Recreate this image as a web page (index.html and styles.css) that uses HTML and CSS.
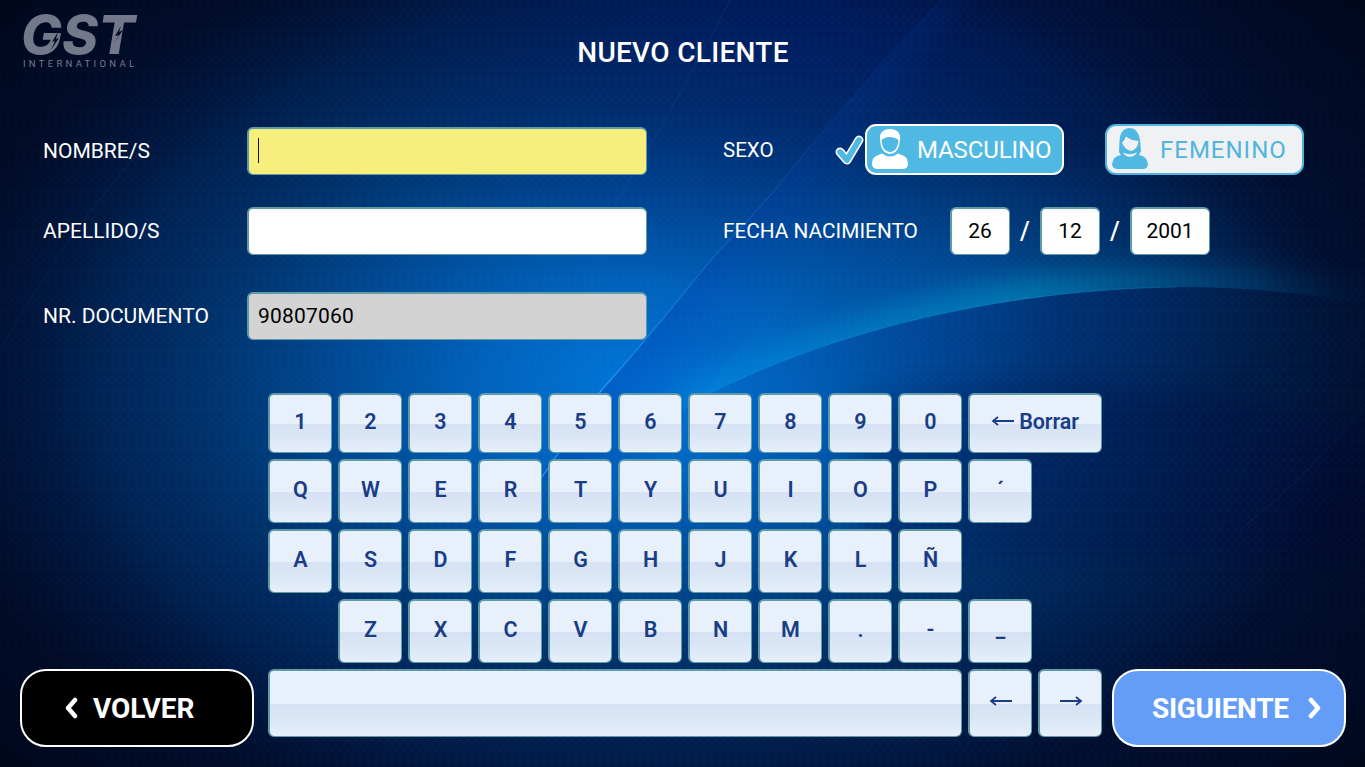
FILE: index.html
```html
<!DOCTYPE html>
<html lang="es">
<head>
<meta charset="utf-8">
<title>Nuevo cliente</title>
<link rel="stylesheet" href="styles.css">
</head>
<body>
<div class="screen">
  <svg class="backdrop" viewBox="0 0 1365 767" aria-hidden="true">
    <defs>
      <radialGradient id="glow" gradientUnits="userSpaceOnUse" cx="0" cy="0" r="1" gradientTransform="translate(640 385) scale(720 450)">
        <stop offset="0" stop-color="#0076d8"/><stop offset=".22" stop-color="#0062bc"/><stop offset=".42" stop-color="#004994"/><stop offset=".62" stop-color="#003068"/><stop offset=".82" stop-color="#001c4a"/><stop offset="1" stop-color="#001034"/>
      </radialGradient>
      <radialGradient id="top" gradientUnits="userSpaceOnUse" cx="0" cy="0" r="1" gradientTransform="translate(800 40) scale(480 260)">
        <stop offset="0" stop-color="#001c78" stop-opacity=".45"/><stop offset="1" stop-color="#001c78" stop-opacity="0"/>
      </radialGradient>
      <radialGradient id="right" gradientUnits="userSpaceOnUse" cx="0" cy="0" r="1" gradientTransform="translate(980 290) scale(320 150)">
        <stop offset="0" stop-color="#0060b8" stop-opacity=".4"/><stop offset="1" stop-color="#0060b8" stop-opacity="0"/>
      </radialGradient>
      <radialGradient id="vignette" gradientUnits="userSpaceOnUse" cx="0" cy="0" r="1" gradientTransform="translate(690 385) scale(900 620)">
        <stop offset=".65" stop-color="#00020f" stop-opacity="0"/><stop offset="1" stop-color="#00020f" stop-opacity=".7"/>
      </radialGradient>
      <linearGradient id="beam" gradientUnits="userSpaceOnUse" x1="690" y1="285" x2="770" y2="335">
        <stop offset="0" stop-color="#0037a8" stop-opacity=".32"/><stop offset="1" stop-color="#0048b0" stop-opacity="0"/>
      </linearGradient>
      <linearGradient id="ray" gradientUnits="userSpaceOnUse" x1="600" y1="400" x2="860" y2="90">
        <stop offset="0" stop-color="#2cb4ff" stop-opacity=".75"/><stop offset=".5" stop-color="#2580d8" stop-opacity=".35"/><stop offset="1" stop-color="#2580d8" stop-opacity="0"/>
      </linearGradient>
      <linearGradient id="rim" gradientUnits="userSpaceOnUse" x1="700" y1="400" x2="1365" y2="300">
        <stop offset="0" stop-color="#00a0f0" stop-opacity=".35"/><stop offset=".5" stop-color="#0a9ac8" stop-opacity=".6"/><stop offset=".8" stop-color="#08689c" stop-opacity=".4"/><stop offset="1" stop-color="#084a7c" stop-opacity=".15"/>
      </linearGradient>
      <linearGradient id="shade" gradientUnits="userSpaceOnUse" x1="800" y1="350" x2="1250" y2="380">
        <stop offset="0" stop-color="#003a98" stop-opacity=".1"/><stop offset=".55" stop-color="#001c60" stop-opacity=".4"/><stop offset="1" stop-color="#001c44" stop-opacity=".4"/>
      </linearGradient>
      <linearGradient id="fade" x1="0" y1="0" x2="0" y2="1"><stop offset="0" stop-color="#fff"/><stop offset=".25" stop-color="#fff"/><stop offset="1" stop-color="#000"/></linearGradient>
      <mask id="down"><rect y="280" width="1365" height="240" fill="url(#fade)"/></mask>
      <clipPath id="above"><path d="M0 0H1365V305Q1280 287 1176 287C1020 289 850 324 717 390L620 450H0Z"/></clipPath>
      <filter id="soft" x="-20%" y="-50%" width="140%" height="200%"><feGaussianBlur stdDeviation="14"/></filter>
      <pattern id="mesh" width="8" height="10" patternUnits="userSpaceOnUse"><path d="M4 0L8 2.5V7.5L4 10L0 7.5V2.5Z" fill="none" stroke="#5ab4ff" stroke-opacity=".05" stroke-width=".8"/></pattern>
    </defs>
    <rect width="1365" height="767" fill="#001034"/>
    <rect width="1365" height="767" fill="url(#glow)"/>
    <rect width="1365" height="767" fill="url(#top)"/>
    <rect width="1365" height="767" fill="url(#right)"/>
    <path d="M540 480L600 392C640 347 665 317 697 277S750 221 783 180S880 60 940 0H1160Q850 180 700 400L640 480Z" fill="url(#beam)"/>
    <path d="M540 480L600 392C640 347 665 317 697 277S750 221 783 180S880 60 940 0" fill="none" stroke="url(#ray)" stroke-width="1.2"/>
    <path d="M600 230Q690 80 730 0" fill="none" stroke="#2080d0" stroke-opacity=".15"/>
    <path d="M0 350Q75 220 150 140" fill="none" stroke="#0d5595" stroke-opacity=".25"/>
    <path d="M1240 530Q1310 475 1365 405" fill="none" stroke="#0d5595" stroke-opacity=".3"/>
    <g clip-path="url(#above)"><path d="M680 409C850 324 1020 289 1176 287Q1280 287 1365 305" fill="none" stroke="url(#rim)" stroke-width="38" filter="url(#soft)"/></g>
    <path d="M717 390C850 324 1020 289 1176 287Q1280 287 1365 305V520H717Z" fill="url(#shade)" mask="url(#down)"/>
    <path d="M717 390C850 324 1020 289 1176 287" fill="none" stroke="url(#rim)" stroke-width="1"/>
    <path d="M860 400Q1090 350 1365 430V560H860Z" fill="#001238" fill-opacity=".22" filter="url(#soft)"/>
    <rect width="1365" height="767" fill="url(#mesh)"/>
    <rect width="1365" height="767" fill="url(#vignette)"/>
  </svg>

  <header class="header">
    <svg class="logo" viewBox="0 0 120 60" role="img" aria-label="GST International">
      <text class="logo-mark" x="1" y="41.5" textLength="114" lengthAdjust="spacingAndGlyphs">GST</text>
      <path class="logo-cut" d="M38 20L32 30L35 29L31 38L39 26L36 27ZM101 14L95 24L99 23L94 31L103 18L99 20Z"/>
      <text class="logo-sub" x="3" y="55" textLength="111">INTERNATIONAL</text>
    </svg>
    <h1 class="title">NUEVO CLIENTE</h1>
  </header>

  <main class="form">
    <label class="label name">NOMBRE/S</label>
    <div class="field active"><span class="caret"></span></div>
    <span class="label sex">SEXO</span>
    <div class="choices">
      <svg class="check" viewBox="0 0 32 34"><path d="M6 19L13 27L25 7" fill="none" stroke="#fff" stroke-width="9" stroke-linecap="round" stroke-linejoin="round"/><path d="M6 19L13 27L25 7" fill="none" stroke="#50b9e3" stroke-width="5.8" stroke-linecap="round" stroke-linejoin="round"/></svg>
      <button class="choice male">
        <svg class="person" viewBox="0 0 38 42"><path d="M19 1C12 1 8 5 9 12L10 18Q12 25 19 26Q26 25 28 18L29 12C30 5 26 1 19 1Z" fill="#fff"/><path d="M10.500 12Q14 9 19 9Q24 9 27.500 12Q27 19 24 22Q19 26 14 22Q11 19 10.500 12Z" fill="#50b9e3"/><path d="M11 25.500Q19 31.500 27 25.500L33 28Q37 30 37 36Q37 41 31 41H7Q1 41 1 36Q1 30 5 28Z" fill="#fff"/></svg>
        <span>MASCULINO</span>
      </button>
      <button class="choice female">
        <svg class="person" viewBox="0 0 38 42"><path d="M19 0C12 0 9 5 8.500 13L8 24L10 27Q2 28 1 36Q1 41 7 41H31Q37 41 37 36Q36 28 28 27L30 23L29 12Q27 0 19 0Z" fill="#50b9e3"/><path d="M15 8.500Q20 12.500 27.500 13Q27 21 20 23Q13 21 11 14.500Q14 12 15 8.500Z" fill="#f0f1f3"/><path d="M12 24.500Q19 28 26 24.500Q24 28.500 19 28.800Q14 28.500 12 24.500Z" fill="#f0f1f3"/></svg>
        <span>FEMENINO</span>
      </button>
    </div>

    <label class="label surname">APELLIDO/S</label>
    <div class="field"></div>
    <span class="label birth">FECHA NACIMIENTO</span>
    <div class="date">
      <div class="field part">26</div><span class="slash">/</span><div class="field part">12</div><span class="slash">/</span><div class="field part year">2001</div>
    </div>

    <label class="label document">NR. DOCUMENTO</label>
    <div class="field locked"><span class="num">90807060</span></div>
  </main>

  <footer class="bottom">
    <button class="nav back"><svg class="chevron" viewBox="0 0 14 22"><path d="M11 3L4 11L11 19"/></svg><span class="back-text">VOLVER</span></button>
    <div class="keyboard">
      <div class="row short">
        <button class="key">1</button><button class="key">2</button><button class="key">3</button><button class="key">4</button><button class="key">5</button><button class="key">6</button><button class="key">7</button><button class="key">8</button><button class="key">9</button><button class="key">0</button>
        <button class="key erase"><svg class="arrow" viewBox="0 0 24 12"><path d="M23 6H2M7 2L2 6L7 10"/></svg><span class="erase-text">Borrar</span></button>
      </div>
      <div class="row">
        <button class="key">Q</button><button class="key">W</button><button class="key">E</button><button class="key">R</button><button class="key">T</button><button class="key">Y</button><button class="key">U</button><button class="key">I</button><button class="key">O</button><button class="key">P</button><button class="key">´</button>
      </div>
      <div class="row">
        <button class="key">A</button><button class="key">S</button><button class="key">D</button><button class="key">F</button><button class="key">G</button><button class="key">H</button><button class="key">J</button><button class="key">K</button><button class="key">L</button><button class="key">Ñ</button>
      </div>
      <div class="row indent">
        <button class="key">Z</button><button class="key">X</button><button class="key">C</button><button class="key">V</button><button class="key">B</button><button class="key">N</button><button class="key">M</button><button class="key">.</button><button class="key">-</button><button class="key">_</button>
      </div>
      <div class="row tall">
        <button class="key space" aria-label="Espacio"></button>
        <button class="key"><svg class="arrow" viewBox="0 0 24 12"><path d="M23 6H2M7 2L2 6L7 10"/></svg></button>
        <button class="key"><svg class="arrow" viewBox="0 0 24 12"><path d="M1 6H22M17 2L22 6L17 10"/></svg></button>
      </div>
    </div>
    <button class="nav next"><span class="next-text">SIGUIENTE</span><svg class="chevron" viewBox="0 0 14 22"><path d="M3 3L10 11L3 19"/></svg></button>
  </footer>
</div>
</body>
</html>
```
FILE: styles.css
```css
* { box-sizing: border-box; }
body { margin: 0; overflow: hidden; background: #000b2c; }
button { margin: 0; padding: 0; font: inherit; color: inherit; }
.screen {
  position: relative;
  isolation: isolate;
  display: flex;
  flex-direction: column;
  width: 1365px;
  height: 767px;
  color: #fff;
  font-family: Roboto, "Liberation Sans", sans-serif;
}
.backdrop { position: absolute; inset: 0; z-index: -1; width: 1365px; height: 767px; }

.header { display: grid; grid-template-columns: 120px 1fr 120px; padding: 12px 20px 0; height: 124px; }
.logo { width: 120px; height: 60px; overflow: visible; }
.logo-mark { font: italic 800 54px Inter, Roboto, sans-serif; fill: #73788a; }
.logo-cut { fill: #020a24; }
.logo-sub { font: 400 9.5px Roboto, sans-serif; fill: #757b8d; }
.title { margin: 23px 0 0; padding-left: 1px; text-align: center; font-size: 28px; line-height: 36px; font-weight: 500; letter-spacing: .3px; }

.form {
  display: grid;
  grid-template-columns: 204px 400px 228px auto;
  grid-template-rows: 48px 48px 48px;
  row-gap: 32px;
  padding: 3px 0 0 43px;
  justify-content: start;
  align-items: center;
  height: 269px;
  align-content: start;
}
.label { font-size: 21px; line-height: 24px; white-space: nowrap; }
.sex, .birth { padding-left: 76px; }
.sex { font-size: 20.5px; margin-top: -2px; }
.birth { font-size: 20.8px; }
.field {
  display: flex;
  align-items: center;
  height: 48px;
  padding: 0 0 2px 9px;
  border: 1px solid #5f9ba7;
  border-width: 2px 1px 1px 2px;
  border-radius: 6px;
  background: #fff;
  color: #000;
  font-size: 21px;
}
.num { letter-spacing: .2px; }
.active { background: #f7ee7b; }
.caret { width: 1px; height: 25px; background: #111; }
.locked { background: #d3d3d3; }
.document, .locked { margin: 5px 0 -5px; }

.choices { display: flex; align-items: center; margin: -3px 0 0 -41px; }
.check { width: 32px; height: 34px; margin-right: -1px; margin-top: 1px; }
.choice {
  display: flex;
  align-items: center;
  width: 199px;
  height: 51px;
  border: 2px solid #fff;
  border-radius: 11px;
  font-size: 24px;
  padding: 0 0 0 4px;
}
.male { background: #50b9e3; color: #fff; letter-spacing: -.1px; }
.male span { padding: 1px 0 0 8px; }
.female { background: #f0f1f3; border-color: #50b4df; color: #50b4df; margin-left: 41px; letter-spacing: 1px; }
.female span { padding: 1px 0 0 11px; }
.person { width: 38px; height: 42px; flex: none; margin-top: -2px; }

.date { display: flex; align-items: center; margin-left: 75px; }
.part { width: 60px; padding: 0 1px 2px 0; justify-content: center; }
.year { width: 80px; }
.slash { width: 30px; text-align: center; font-size: 25px; font-weight: 500; }

.bottom { display: grid; grid-template-columns: 234px 834px 234px; padding-left: 20px; align-items: end; height: 354px; }
.keyboard { margin-left: 14px; align-self: start; display: flex; flex-direction: column; gap: 6px; width: 834px; }
.row { display: flex; gap: 6px; height: 64px; }
.short { height: 60px; }
.tall { height: 68px; }
.indent { padding-left: 70px; }
.key {
  display: flex;
  align-items: center;
  justify-content: center;
  width: 64px;
  height: 100%;
  padding-bottom: 4px;
  border: solid #5f9ba7;
  border-width: 2px 1px 1px 2px;
  border-radius: 6px;
  background: linear-gradient(#e8f0fc 0 50%, #d6e2f3 51%, #dbe7f6 75%, #e6effa);
  color: #193d86;
  font-size: 21.5px;
  font-weight: 600;
}
.erase { width: 134px; gap: 4px; padding-right: 1px; }
.erase-text { letter-spacing: -.1px; }
.space { width: 694px; }
.arrow { width: 24px; height: 12px; margin-top: -2px; fill: none; stroke: #193d86; stroke-width: 1.8; }
.nav {
  display: flex;
  align-items: center;
  width: 234px;
  height: 78px;
  border: 2px solid #fff;
  border-radius: 26px;
  font-size: 28px;
  font-weight: 700;
}
.back { background: #000; padding-left: 42px; }
.back-text { padding-left: 15px; letter-spacing: -.1px; }
.next { background: #639df7; margin-left: 24px; padding-left: 38px; }
.next-text { width: 156px; text-align: left; letter-spacing: -.3px; }
.chevron { width: 14px; height: 22px; flex: none; margin-top: -1px; fill: none; stroke: #fff; stroke-width: 4.5; stroke-linecap: round; stroke-linejoin: round; }
```
